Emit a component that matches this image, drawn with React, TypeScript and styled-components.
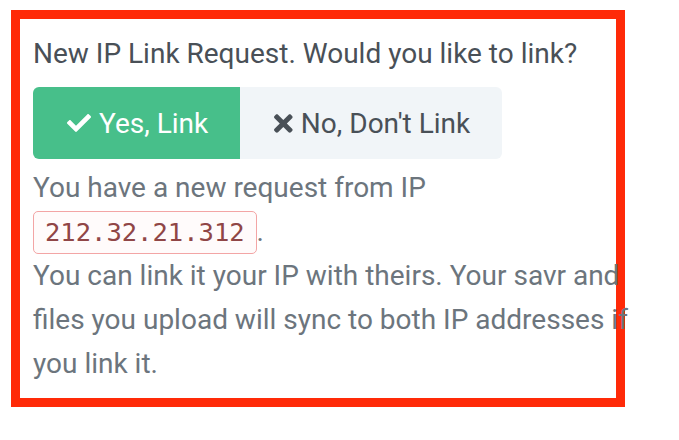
import React from 'react'
import styled, { createGlobalStyle } from 'styled-components'
import { FaCheck, FaTimes } from 'react-icons/fa'

const GlobalStyle = createGlobalStyle`
  body {
    margin: 0;
    background: #ffffff;
    font-family: Roboto, "Liberation Sans", sans-serif;
  }
`

const Frame = styled.div`
  margin: 10px 0 0 11px;
  width: 570px;
  height: 379px;
  padding: 0 13px;
  border: 9px solid #ff2a08;
`

const Title = styled.p`
  margin: 17px 0 15px;
  font-size: 28px;
  line-height: 36px;
  color: #495057;
  white-space: nowrap;
`

const ButtonGroup = styled.div`
  display: flex;
`

const ChoiceButton = styled.button<{ $primary?: boolean }>`
  display: flex;
  align-items: center;
  gap: 8px;
  height: 72px;
  padding: 0 32px 0 34px;
  border: none;
  font-family: inherit;
  font-size: 28px;
  color: ${(p) => (p.$primary ? '#ffffff' : '#495057')};
  background: ${(p) => (p.$primary ? '#47bf8a' : '#f1f5f8')};
  border-radius: ${(p) => (p.$primary ? '6px 0 0 6px' : '0 6px 6px 0')};
  cursor: pointer;

  svg {
    font-size: ${(p) => (p.$primary ? '24px' : '27px')};
    width: ${(p) => (p.$primary ? '1em' : '0.69em')};
    height: 1em;
  }
`

const Message = styled.p`
  margin: 7px 0 0;
  width: 600px;
  font-size: 28px;
  line-height: 44px;
  color: #6c757d;
`

const Address = styled.code`
  display: inline-block;
  padding: 0 11px;
  line-height: 41px;
  font-family: "DejaVu Sans Mono", monospace;
  font-size: 25.5px;
  color: #904646;
  background: #fffbfb;
  border: 1px solid #f3a5a5;
  border-radius: 5px;
`

export default function App() {
  return (
    <>
      <GlobalStyle />
      <Frame>
        <Title>New IP Link Request. Would you like to link?</Title>
        <ButtonGroup>
          <ChoiceButton $primary>
            <FaCheck />
            Yes, Link
          </ChoiceButton>
          <ChoiceButton>
            <FaTimes />
            No, Don't Link
          </ChoiceButton>
        </ButtonGroup>
        <Message>
          You have a new request from IP <Address>212.32.21.312</Address>.
          <br />
          You can link it your IP with theirs. Your savr and files you upload will sync to both IP
          addresses if you link it.
        </Message>
      </Frame>
    </>
  )
}
